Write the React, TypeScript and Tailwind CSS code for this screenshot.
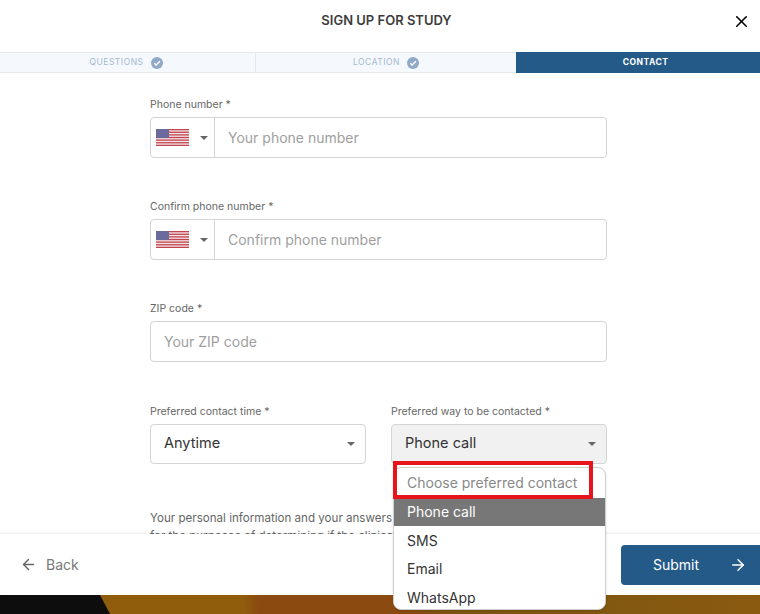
import { ArrowLeft, ArrowRight, X } from 'lucide-react'

const font = { fontFamily: 'Inter, "Open Sans", sans-serif' }

function Flag() {
  const stripes = [0, 2, 4, 6, 8, 10, 12]
  return (
    <svg width="33" height="17" viewBox="0 0 33 17" className="shrink-0">
      <rect width="33" height="17" fill="#f1e6e8" />
      {stripes.map((y) => (
        <rect key={y} x="0" y={y * 1.31} width="33" height="1.31" fill="#c5444f" />
      ))}
      <rect width="13" height="9" fill="#6a6a9c" />
    </svg>
  )
}

function Caret() {
  return <span className="h-0 w-0 border-x-[4px] border-t-[4px] border-x-transparent border-t-[#666]" />
}

function Check() {
  return (
    <svg width="12" height="12" viewBox="0 0 12 12" className="shrink-0">
      <circle cx="6" cy="6" r="6" fill="#8fa9c6" />
      <path d="M3.2 6.2 5.2 8 8.8 4.2" fill="none" stroke="#fff" strokeWidth="1.4" />
    </svg>
  )
}

function Label({ text }: { text: string }) {
  return <div className="h-[20px] text-[10.5px] leading-[16px] text-[#666]">{text} *</div>
}

function PhoneField({ label, placeholder }: { label: string; placeholder: string }) {
  return (
    <div>
      <Label text={label} />
      <div className="flex h-[41px] rounded border border-[#d4d4d4] bg-white">
        <div className="flex w-[64px] items-center gap-[11px] border-r border-[#d4d4d4] pl-[5px]">
          <Flag />
          <Caret />
        </div>
        <div className="flex flex-1 items-center pl-[13px] text-[14px] text-[#a0a0a0]">{placeholder}</div>
      </div>
    </div>
  )
}

function SelectBox({ label, value, active }: { label: string; value: string; active?: boolean }) {
  return (
    <div className="flex-1">
      <Label text={label} />
      <div className={`flex h-[40px] items-center justify-between rounded border border-[#d4d4d4] pl-[13px] pr-[10px] text-[14.5px] text-[#333] ${active ? 'bg-[#f1f1f1]' : 'bg-white'}`}>
        <span className="pb-[3px]">{value}</span>
        <Caret />
      </div>
    </div>
  )
}

export default function App() {
  return (
    <div className="relative h-[614px] w-[760px] overflow-hidden bg-white" style={font}>
      <div className="relative flex h-[52px] items-center justify-center pb-[10px] pl-[13px] text-[13px] font-semibold text-[#3d3d3d]">
        SIGN UP FOR STUDY
        <X size={19} strokeWidth={2} className="absolute left-[732px] top-[12px] text-black" />
      </div>

      <div className="flex h-[21px] text-[8.5px] tracking-[0.5px]">
        <div className="flex w-[256px] items-center justify-center gap-[7px] border-y border-r border-[#e4e8ec] bg-[#f5f9fd] pr-[3px] text-[#a5b8cf]">
          QUESTIONS <Check />
        </div>
        <div className="flex w-[260px] items-center justify-center gap-[7px] border-y border-[#e4e8ec] bg-[#f5f9fd] text-[#a5b8cf]">
          LOCATION <Check />
        </div>
        <div className="flex flex-1 items-center justify-center bg-[#245a87] pl-[15px] font-bold text-white">CONTACT</div>
      </div>

      <div className="ml-[150px] w-[457px] pt-[24px]">
        <div className="flex flex-col gap-[41px]">
          <PhoneField label="Phone number" placeholder="Your phone number" />
          <PhoneField label="Confirm phone number" placeholder="Confirm phone number" />
          <div>
            <Label text="ZIP code" />
            <div className="flex h-[41px] items-center rounded border border-[#d4d4d4] pl-[13px] text-[14px] text-[#a0a0a0]">
              Your ZIP code
            </div>
          </div>
          <div className="mt-[1px] flex gap-[25px]">
            <SelectBox label="Preferred contact time" value="Anytime" />
            <SelectBox label="Preferred way to be contacted" value="Phone call" active />
          </div>
        </div>
        <p className="mt-[45px] text-[11.6px] leading-[18px] text-[#666]">
          Your personal information and your answers will be used only
          <br />
          for the purposes of determining if the clinical study is right for you
        </p>
      </div>

      {/* footer sits over the scrolled form */}
      <div className="absolute inset-x-0 top-[534px] h-[61px] rounded-bl bg-white shadow-[0_-1px_3px_rgba(0,0,0,0.08)]">
        <div className="flex h-full items-center justify-between pl-[20px]">
          <div className="flex items-center gap-[9px] text-[14px] text-[#777]">
            <ArrowLeft size={17} className="text-[#666]" />
            Back
          </div>
          <div className="flex h-[40px] w-[139px] items-center gap-[30px] rounded-l bg-[#245a87] pl-[32px] text-[14px] text-white">
            Submit
            <ArrowRight size={18} />
          </div>
        </div>
      </div>

      <div className="absolute inset-x-0 top-[595px] flex h-[19px] bg-[linear-gradient(90deg,#8f5d0c_0%,#8f5d0c_32%,#8b4a10_34%,#8b4a10_52%,#7a5510_60%,#8a5a10_100%)]">
        <div className="h-full w-[110px] bg-[#0d0d0d] [clip-path:polygon(0_0,100px_0,110px_100%,0_100%)]" />
      </div>

      {/* open dropdown */}
      <div className="absolute left-[393px] top-[467px] w-[213px] overflow-hidden rounded-lg border border-[#cfcfcf] bg-white text-[14px] text-[#333] shadow-sm">
        <div className="flex h-[30px] items-center pb-[2px] pl-[13px] text-[#888]">Choose preferred contact</div>
        <div className="flex h-[28px] items-center bg-[#777] pb-[2px] pl-[13px] text-white">Phone call</div>
        <div className="flex h-[29px] items-center pb-[1px] pl-[13px]">SMS</div>
        <div className="flex h-[29px] items-center pb-[2px] pl-[13px]">Email</div>
        <div className="flex h-[25px] items-center pl-[13px] pt-[2px]">WhatsApp</div>
      </div>
      <div className="absolute left-[393px] top-[461px] h-[38px] w-[200px] border-[4px] border-[#e8141c]" />
    </div>
  )
}
